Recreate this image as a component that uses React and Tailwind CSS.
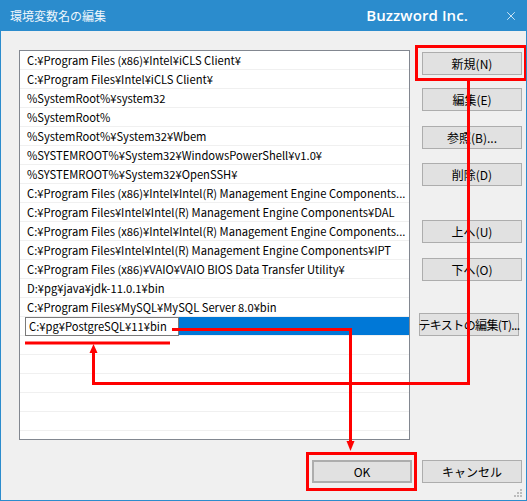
import { X } from 'lucide-react'

const paths = [
  'C:¥Program Files (x86)¥Intel¥iCLS Client¥',
  'C:¥Program Files¥Intel¥iCLS Client¥',
  '%SystemRoot%¥system32',
  '%SystemRoot%',
  '%SystemRoot%¥System32¥Wbem',
  '%SYSTEMROOT%¥System32¥WindowsPowerShell¥v1.0¥',
  '%SYSTEMROOT%¥System32¥OpenSSH¥',
  'C:¥Program Files (x86)¥Intel¥Intel(R) Management Engine Components...',
  'C:¥Program Files¥Intel¥Intel(R) Management Engine Components¥DAL',
  'C:¥Program Files (x86)¥Intel¥Intel(R) Management Engine Components...',
  'C:¥Program Files¥Intel¥Intel(R) Management Engine Components¥IPT',
  'C:¥Program Files (x86)¥VAIO¥VAIO BIOS Data Transfer Utility¥',
  'D:¥pg¥java¥jdk-11.0.1¥bin',
  'C:¥Program Files¥MySQL¥MySQL Server 8.0¥bin',
]

const font = { fontFamily: '"Noto Sans CJK JP", "Noto Sans", sans-serif' }

function Btn({ children, className = '' }) {
  return (
    <button className={`h-[23px] w-[100px] bg-[#e1e1e1] border border-[#adadad] text-[12px] text-black flex items-center justify-center leading-none whitespace-nowrap ${className}`}>
      {children}
    </button>
  )
}

export default function App() {
  return (
    <div className="w-[527px] h-[501px] relative bg-[#f0f0f0] border border-t-0 border-[#2b8ccd] flex flex-col overflow-hidden"
      style={font}>

      {/* Barra de título */}
      <div className="h-[31px] -mx-px bg-[#2b8ccd] flex items-center text-white shrink-0">
        <span className="pl-[10px] text-[12px] text-[#eef6fc]">環境変数名の編集</span>
        <span className="ml-auto text-[15px] font-semibold tracking-[0.1px]" style={{ fontFamily: '"Open Sans", sans-serif' }}>
          Buzzword Inc.
        </span>
        <X className="ml-[36px] mr-[9px]" size={14} strokeWidth={1.3} />
      </div>

      <div className="flex-1 flex flex-col pl-[18px] pt-[19px]">
        <div className="flex">

          {/* Lista */}
          <div className="w-[391px] h-[390px] border border-[#828790] bg-white overflow-hidden">
            {paths.map((p, i) => (
              <div key={i} className="h-[19px] border-b border-[#f0f0f0] pl-[7px] flex items-center text-[11.2px] text-black whitespace-nowrap">
                {p}
              </div>
            ))}
            <div className="h-[19px] border-b border-[#f0f0f0] flex">
              <div className="w-[5px]" />
              <div className="w-[154px] h-[19px] border border-[#7a7a7a] bg-white pl-[3px] flex items-center text-[11.2px] text-black whitespace-nowrap">
                C:¥pg¥PostgreSQL¥11¥bin
              </div>
              <div className="flex-1 bg-[#0078d7]" />
            </div>
            {[0, 1, 2, 3, 4, 5].map(i => (
              <div key={i} className="h-[19px] border-b border-[#f0f0f0]" />
            ))}
          </div>

          {/* Botones */}
          <div className="ml-[12px] flex flex-col">
            <Btn className="mt-[2px]">新規(N)</Btn>
            <Btn className="mt-[13px]">編集(E)</Btn>
            <Btn className="mt-[15px]">参照(B)...</Btn>
            <Btn className="mt-[14px]">削除(D)</Btn>
            <Btn className="mt-[34px]">上へ(U)</Btn>
            <Btn className="mt-[15px]">下へ(O)</Btn>
            <Btn className="mt-[32px] -ml-[3px] w-[99px] text-[11px] tracking-[-0.6px]">テキストの編集(T)...</Btn>
          </div>
        </div>

        <div className="mt-[20px] flex justify-end gap-[10px] pr-[4px]">
          <Btn className="border-2 border-[#0078d7]">OK</Btn>
          <Btn>キャンセル</Btn>
        </div>
      </div>

      {/* Grip */}
      <svg className="absolute right-[4px] bottom-[3px]" width="8" height="8" viewBox="0 0 8 8">
        <rect x="6" y="0" width="2" height="2" fill="#bcbcbc" />
        <rect x="3" y="3" width="2" height="2" fill="#bcbcbc" />
        <rect x="6" y="3" width="2" height="2" fill="#bcbcbc" />
        <rect x="0" y="6" width="2" height="2" fill="#bcbcbc" />
        <rect x="3" y="6" width="2" height="2" fill="#bcbcbc" />
        <rect x="6" y="6" width="2" height="2" fill="#bcbcbc" />
      </svg>

      {/* Anotaciones rojas */}
      <svg className="absolute -left-px top-0 pointer-events-none" width="527" height="501" viewBox="0 0 527 501">
        <g fill="none" stroke="#ff0000" strokeWidth="3">
          <rect x="416.5" y="46.5" width="109" height="33" />
          <polyline points="468.5,80 468.5,383.5 93.5,383.5 93.5,352" />
          <line x1="25" y1="343" x2="170" y2="343" />
          <polyline points="172,329.5 350.5,329.5 350.5,442" />
          <rect x="307.5" y="453.5" width="108" height="36" />
        </g>
        <polygon points="93.5,344 89.5,353 97.5,353" fill="#ff0000" />
        <polygon points="350.5,451 346.5,441 354.5,441" fill="#ff0000" />
      </svg>
    </div>
  )
}
